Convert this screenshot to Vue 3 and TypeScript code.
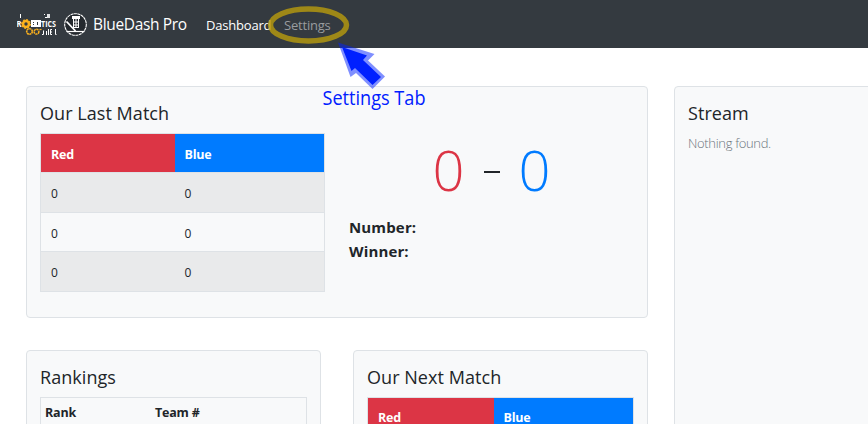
<script setup lang="ts">
const scores: number[][] = [
  [0, 0],
  [0, 0],
  [0, 0],
]
</script>

<template>
  <div class="page">
    <header class="navbar">
      <svg class="robotics" width="42" height="26" viewBox="0 0 42 26" aria-hidden="true">
        <path d="M3.500 3v4M27.500 3v1M28 6.500h2" stroke="#fff" stroke-width="1" />
        <path d="M30 3h3v4h-3z" fill="#fff" fill-opacity=".85" />
        <text x="-.5" y="16" textLength="5" lengthAdjust="spacingAndGlyphs" class="logo-text">R</text>
        <path d="M14 9h10v7H14z" fill="#fff" />
        <path d="M16.500 11v1M16.500 13v1M20.500 11v3" fill="none" stroke="#343a40" stroke-width="1" />
        <text x="24" y="16" textLength="15" lengthAdjust="spacingAndGlyphs" class="logo-text">TICS</text>
        <circle cx="9" cy="13" r="3" fill="none" stroke="#fcb11c" stroke-width="2.600" />
        <circle cx="9" cy="13" r="4.400" fill="none" stroke="#fcb11c" stroke-width="1.100" stroke-dasharray="1.800 1.600" />
        <circle cx="12.500" cy="20.500" r="2.800" fill="none" stroke="#fcb11c" stroke-width="1.600" stroke-dasharray="2 .5" />
        <circle cx="19.500" cy="20.700" r="2.400" fill="none" stroke="#fcb11c" stroke-width="1.500" stroke-dasharray="2 .5" />
        <path d="M22.500 18.500h2" stroke="#fcb11c" stroke-width="1.200" />
        <path d="M25 23.500h1.500v-4M29.500 24v-4M31.500 18v6M35 18.500h-1.500v5H35M33.500 21H35M38.500 18v5.500h1" fill="none" stroke="#fff" stroke-width="1" />
      </svg>
      <svg class="emblem" width="24" height="26" viewBox="0 0 24 26" aria-hidden="true">
        <circle cx="12.500" cy="13.500" r="10.800" fill="#24292e" stroke="#fff" stroke-width="1.100" stroke-dasharray="3 .5" />
        <path d="M10.500 8v8.500M15.500 8v9M13 8v8M10 11h6M10 14h6M10 16.500h5.500" fill="none" stroke="#fff" stroke-width="1" />
        <path d="M9 5h8v3H9z" fill="#fff" />
        <path d="M3.500 10.500l9 9.500" fill="none" stroke="#fff" stroke-width="1.800" />
        <path d="M3.500 20.500h18" fill="none" stroke="#fff" stroke-width="1.200" />
      </svg>
      <span class="brand">BlueDash Pro</span>
      <nav>
        <a class="active">Dashboard</a>
        <a class="settings">Settings</a>
      </nav>
    </header>

    <main>
      <div class="left">
        <section class="card last">
          <h2>Our Last Match</h2>
          <div class="last-body">
            <table class="match">
              <thead>
                <tr><th class="red">Red</th><th class="blue">Blue</th></tr>
              </thead>
              <tbody>
                <tr v-for="(row, i) in scores" :key="i">
                  <td v-for="(value, j) in row" :key="j">{{ value }}</td>
                </tr>
              </tbody>
            </table>
            <div class="result">
              <div class="score">
                <span class="score-red">0</span><span class="dash"></span><span class="score-blue">0</span>
              </div>
              <div class="fact number">Number:</div>
              <div class="fact">Winner:</div>
            </div>
          </div>
        </section>
        <div class="lower">
          <section class="card small">
            <h2>Rankings</h2>
            <div class="ranks"><b class="rank">Rank</b><b class="team">Team #</b></div>
          </section>
          <section class="card small">
            <h2>Our Next Match</h2>
            <table class="match next">
              <thead>
                <tr><th class="red">Red</th><th class="blue">Blue</th></tr>
              </thead>
            </table>
          </section>
        </div>
      </div>
      <section class="card stream">
        <h2>Stream</h2>
        <p>Nothing found.</p>
      </section>
    </main>

    <svg class="callout" width="868" height="120" viewBox="0 0 868 120">
      <ellipse cx="308.500" cy="25" rx="38" ry="16" fill="none" stroke="#b99c0c" stroke-opacity=".8" stroke-width="5.500" />
      <path d="M338 42.500L374.500 54 368 60.500 385 76.500 372.500 89 356 73 350.500 77z" fill="#0020ff" fill-opacity=".5" />
      <path d="M342 47L367 55.500 363 60 381 77 372.500 85 355 68 351.500 71z" fill="#0020ff" />
      <text x="322.500" y="105" textLength="103" lengthAdjust="spacingAndGlyphs">Settings Tab</text>
    </svg>
  </div>
</template>

<style>
body { background: #fff; overflow: hidden; }
</style>

<style scoped>
* { box-sizing: border-box; }
.page { position: relative; width: 868px; height: 424px; overflow: hidden; color: #212529; font-family: "Open Sans", "Noto Sans", sans-serif; }
.navbar { display: flex; align-items: center; height: 48px; padding-left: 17px; background: #343a40; color: #fff; }
.robotics { flex: none; }
.emblem { flex: none; margin-left: 4px; }
.logo-text { fill: #fff; font: 700 9px "Open Sans", sans-serif; }
.brand { width: 113px; margin-left: 6px; font-size: 15.500px; line-height: 24px; white-space: nowrap; letter-spacing: -.35px; }
nav { display: flex; font-size: 13px; line-height: 20px; padding-top: 2px; white-space: nowrap; }
nav a { width: 78px; letter-spacing: -.2px; }
.active { color: #fff; }
.settings { color: #999c9f; }
main { display: flex; gap: 26px; padding: 38px 0 0 26px; }
.left { flex: none; width: 622px; }
.card { background: #f8f9fa; border: 1px solid #dee2e6; border-radius: 4px; padding: 15px 13px 0; }
.last { height: 232px; }
h2 { margin: 0 0 8px; font-size: 18px; font-weight: 400; line-height: 23px; white-space: nowrap; letter-spacing: .05px; }
.last-body { display: flex; gap: 24px; }
.match { width: 285px; flex: none; border-collapse: collapse; border: 1px solid #dee2e6; table-layout: fixed; font-size: 12px; line-height: 18px; }
.match th, .match td { height: 39.500px; padding: 4px 10px 0; text-align: left; }
.match th { height: 39px; color: #fff; font-size: 12.500px; font-weight: 700; letter-spacing: -.2px; padding-top: 3px; }
.match tr { border-bottom: 1px solid #dee2e6; }
.red { width: 134px; background: #dc3545; }
.blue { background: #007bff; }
.match tbody tr:nth-child(odd) { background: #e9eaeb; }
.result { flex: 1; }
.score { display: flex; align-items: center; justify-content: center; height: 74px; font-size: 56px; font-weight: 300; line-height: 72px; }
.score-red { color: #dc3545; }
.score-blue { color: #007bff; }
.score-red, .score-blue { margin-top: -2px; }
.dash { width: 16px; height: 2px; margin: 3px 19px 0; background: #212529; }
.fact { font-size: 15px; font-weight: 700; line-height: 24px; letter-spacing: .15px; }
.number { margin-top: 8px; }
.lower { display: flex; gap: 32px; margin-top: 32px; }
.small { width: 295px; height: 130px; }
.ranks { display: flex; width: 267px; height: 90px; padding: 6px 4px; border: 1px solid #dee2e6; font-size: 12.500px; line-height: 18px; letter-spacing: -.2px; }
.rank { width: 110px; }
.next { width: 267px; }
.next th { line-height: 16px; padding-top: 1px; }
.next .red { width: 126px; }
.stream { flex: none; width: 300px; height: 500px; }
.stream p { margin: 0; font-size: 13px; font-weight: 300; line-height: 20px; color: #6c757d; letter-spacing: -.33px; }
.callout { position: absolute; left: 0; top: 0; pointer-events: none; }
.callout text { fill: #0020ff; font: 20px "Open Sans", sans-serif; }
</style>
